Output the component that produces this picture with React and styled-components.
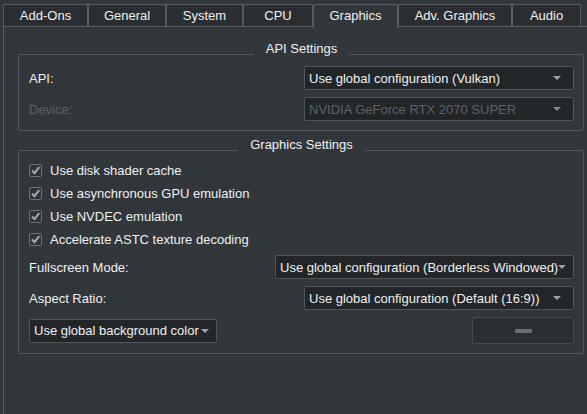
import styled, { createGlobalStyle } from 'styled-components';

const GlobalStyle = createGlobalStyle`
  body {
    margin: 0;
    background: #31363b;
    font-family: "Liberation Sans", Arial, sans-serif;
    font-size: 13px;
    color: #eff0f1;
  }
  * { box-sizing: border-box; }
`;

const tabs = [
  { name: 'Add-Ons', width: 85 },
  { name: 'General', width: 78 },
  { name: 'System', width: 77 },
  { name: 'CPU', width: 70 },
  { name: 'Graphics', width: 85, active: true },
  { name: 'Adv. Graphics', width: 114 },
  { name: 'Audio', width: 69 },
];

const checks = [
  'Use disk shader cache',
  'Use asynchronous GPU emulation',
  'Use NVDEC emulation',
  'Accelerate ASTC texture decoding',
];

function ArrowDown() {
  return (
    <svg width="8" height="4" viewBox="0 0 8 4">
      <path d="M0 0 H8 L4 4 Z" fill="#9ea1a4" />
    </svg>
  );
}

function CheckMark() {
  return (
    <svg width="11" height="11" viewBox="0 0 11 11">
      <path d="M2 5.5 L4.5 8.2 L9.2 2.2" fill="none" stroke="#a7a9ab" strokeWidth="2" />
    </svg>
  );
}

function Combo({ text, width, disabled, compact }) {
  return (
    <ComboBox $width={width} $disabled={disabled} $compact={compact}>
      <span>{text}</span>
      <ArrowDown />
    </ComboBox>
  );
}

export default function App() {
  return (
    <>
      <GlobalStyle />
      <Window>
        <TabBar>
          {tabs.map((t) => (
            <Tab key={t.name} $width={t.width} $active={t.active}>
              {t.name}
            </Tab>
          ))}
        </TabBar>
        <Pane>
          <Group>
            <Legend>API Settings</Legend>
            <Stack>
              <Row>
                <Label>API:</Label>
                <Combo text="Use global configuration (Vulkan)" width={270} />
              </Row>
              <Row>
                <Label $disabled>Device:</Label>
                <Combo text="NVIDIA GeForce RTX 2070 SUPER" width={270} disabled />
              </Row>
            </Stack>
          </Group>

          <Group $second>
            <Legend>Graphics Settings</Legend>
            <Stack>
              <CheckList>
                {checks.map((c) => (
                  <CheckRow key={c}>
                    <CheckBox>
                      <CheckMark />
                    </CheckBox>
                    {c}
                  </CheckRow>
                ))}
              </CheckList>
              <Row>
                <Label>Fullscreen Mode:</Label>
                <Combo text="Use global configuration (Borderless Windowed)" width={299} compact />
              </Row>
              <Row>
                <Label>Aspect Ratio:</Label>
                <Combo text="Use global configuration (Default (16:9))" width={270} />
              </Row>
              <Row>
                <Combo text="Use global background color" width={188} compact />
                <ColorButton>
                  <Dash />
                </ColorButton>
              </Row>
            </Stack>
          </Group>
        </Pane>
      </Window>
    </>
  );
}

const Window = styled.div`
  width: 587px;
  height: 414px;
  overflow: hidden;
  padding-left: 3px;
  padding-top: 4px;
  display: flex;
  flex-direction: column;
`;

const TabBar = styled.div`
  display: flex;
  align-items: flex-end;
  height: 23px;
  position: relative;
  z-index: 1;
`;

const Tab = styled.div`
  width: ${(p) => p.$width}px;
  height: ${(p) => (p.$active ? 24 : 23)}px;
  margin-bottom: ${(p) => (p.$active ? -1 : 0)}px;
  border: 1px solid #565c62;
  border-bottom: ${(p) => (p.$active ? 'none' : '1px solid #565c62')};
  border-radius: ${(p) => (p.$active ? '3px 3px 0 0' : '0')};
  background: ${(p) => (p.$active ? '#31363b' : '#2a2e32')};
  color: #eff0f1;
  display: flex;
  align-items: center;
  justify-content: center;
  padding-bottom: ${(p) => (p.$active ? 2 : 1)}px;
`;

const Pane = styled.div`
  flex: 1;
  width: 600px;
  border-left: 1px solid #565c62;
  border-top: 1px solid #565c62;
  margin-top: -1px;
  padding: 15px 0 0 14px;
`;

const Group = styled.fieldset`
  width: 566px;
  margin: ${(p) => (p.$second ? '7px' : '0')} 0 0 0;
  padding: 0 9px 9px 10px;
  border: 1px solid #51575d;
  border-radius: 2px;
`;

const Legend = styled.legend`
  margin: 0 auto;
  padding: 0 12px 10px;
  line-height: 14px;
  color: #eff0f1;
`;

const Stack = styled.div`
  display: flex;
  flex-direction: column;
  gap: 7px;
`;

const Row = styled.div`
  display: flex;
  align-items: center;
  justify-content: space-between;
`;

const Label = styled.span`
  color: ${(p) => (p.$disabled ? '#5d6266' : '#eff0f1')};
`;

const ComboBox = styled.div`
  width: ${(p) => p.$width}px;
  height: 24px;
  background: #232629;
  border: 1px solid #50565c;
  border-radius: 2px;
  display: flex;
  align-items: center;
  justify-content: space-between;
  padding: 0 ${(p) => (p.$compact ? 7 : 12)}px 0 4px;
  color: ${(p) => (p.$disabled ? '#5d6266' : '#eff0f1')};
  white-space: nowrap;

  svg {
    opacity: ${(p) => (p.$disabled ? 0.8 : 1)};
  }
`;

const CheckList = styled.div`
  display: flex;
  flex-direction: column;
  gap: 6px;
`;

const CheckRow = styled.label`
  display: flex;
  align-items: center;
  gap: 8px;
  height: 17px;
`;

const CheckBox = styled.span`
  width: 13px;
  height: 13px;
  border: 1px solid #6e7378;
  border-radius: 2px;
  background: #2f3337;
  display: flex;
  align-items: center;
  justify-content: center;
`;

const ColorButton = styled.div`
  width: 102px;
  height: 27px;
  background: #2b2f33;
  border: 1px solid #464b50;
  border-radius: 2px;
  display: flex;
  align-items: center;
  justify-content: center;
`;

const Dash = styled.span`
  width: 17px;
  height: 4px;
  background: #6b6f73;
`;
